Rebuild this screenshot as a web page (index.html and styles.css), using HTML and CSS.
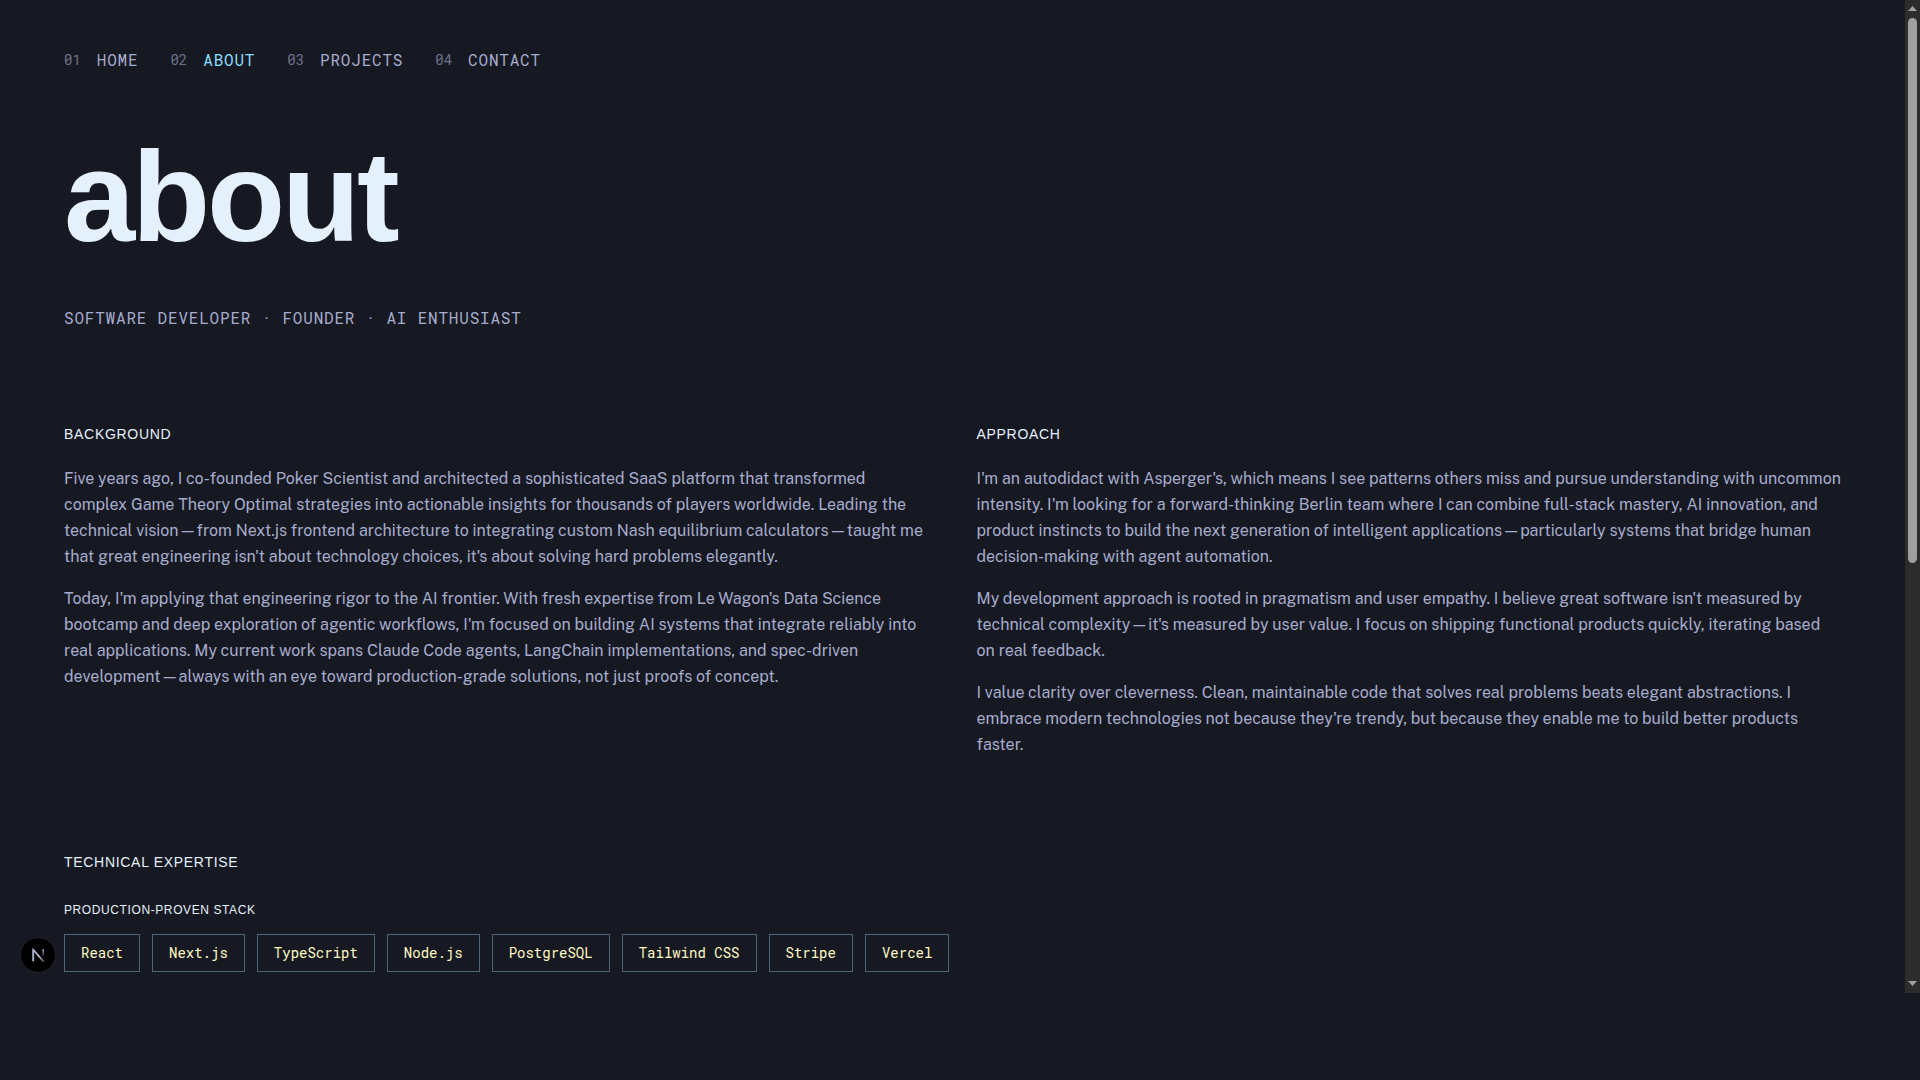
FILE: index.html
```html
<!DOCTYPE html>
<html lang="en">
<head>
	<meta charset="utf-8">
	<meta name="viewport" content="width=device-width, initial-scale=1">
	<title>about</title>
	<link rel="stylesheet" href="styles.css">
</head>
<body>
	<div class="page">
		<div class="content">
			<nav class="nav">
				<a href="#home"><span class="num">01</span>HOME</a>
				<a href="#about" class="active"><span class="num">02</span>ABOUT</a>
				<a href="#projects"><span class="num">03</span>PROJECTS</a>
				<a href="#contact"><span class="num">04</span>CONTACT</a>
			</nav>
			<main>
				<h1>about</h1>
				<p class="subtitle">SOFTWARE DEVELOPER · FOUNDER · AI ENTHUSIAST</p>
				<div class="columns">
					<section class="column">
						<h2>BACKGROUND</h2>
						<p>Five years ago, I co-founded Poker Scientist and architected a sophisticated SaaS platform that transformed complex Game Theory Optimal strategies into actionable insights for thousands of players worldwide. Leading the technical vision—from Next.js frontend architecture to integrating custom Nash equilibrium calculators—taught me that great engineering isn't about technology choices, it's about solving hard problems elegantly.</p>
						<p>Today, I'm applying that engineering rigor to the AI frontier. With fresh expertise from Le Wagon's Data Science bootcamp and deep exploration of agentic workflows, I'm focused on building AI systems that integrate reliably into real applications. My current work spans Claude Code agents, LangChain implementations, and spec-driven development—always with an eye toward production-grade solutions, not just proofs of concept.</p>
					</section>
					<section class="column">
						<h2>APPROACH</h2>
						<p>I'm an autodidact with Asperger's, which means I see patterns others miss and pursue understanding with uncommon intensity. I'm looking for a forward-thinking Berlin team where I can combine full-stack mastery, AI innovation, and product instincts to build the next generation of intelligent applications—particularly systems that bridge human decision-making with agent automation.</p>
						<p>My development approach is rooted in pragmatism and user empathy. I believe great software isn't measured by technical complexity—it's measured by user value. I focus on shipping functional products quickly, iterating based on real feedback.</p>
						<p>I value clarity over cleverness. Clean, maintainable code that solves real problems beats elegant abstractions. I embrace modern technologies not because they're trendy, but because they enable me to build better products faster.</p>
					</section>
				</div>
				<section class="expertise">
					<h2>TECHNICAL EXPERTISE</h2>
					<h3>PRODUCTION-PROVEN STACK</h3>
					<ul class="tags">
						<li>React</li>
						<li>Next.js</li>
						<li>TypeScript</li>
						<li>Node.js</li>
						<li>PostgreSQL</li>
						<li>Tailwind CSS</li>
						<li>Stripe</li>
						<li>Vercel</li>
					</ul>
				</section>
			</main>
		</div>
		<!-- scroll bar -->
		<div class="scrollbar" aria-hidden="true">
			<svg class="arrow" viewBox="0 0 9 5"><path d="M0 5L4.500 0L9 5Z"/></svg>
			<div class="track"><div class="thumb"></div></div>
			<svg class="arrow" viewBox="0 0 9 5"><path d="M0 0L4.500 5L9 0Z"/></svg>
		</div>
		<!-- dev tools button -->
		<button class="badge" type="button" aria-label="Open Next.js Dev Tools">
			<svg viewBox="0 0 36 36" fill="none">
				<defs>
					<linearGradient id="diag" x1="19" y1="19" x2="25" y2="26" gradientUnits="userSpaceOnUse">
						<stop stop-color="#c4c9e2"/>
						<stop offset="1" stop-color="#c4c9e2" stop-opacity="0.3"/>
					</linearGradient>
					<linearGradient id="stem" x1="23" y1="12" x2="23" y2="21" gradientUnits="userSpaceOnUse">
						<stop stop-color="#a6accd"/>
						<stop offset="1" stop-color="#a6accd" stop-opacity="0"/>
					</linearGradient>
				</defs>
				<path d="M13 24.500V12.500L24 25" stroke="url(#diag)" stroke-width="1.700"/>
				<path d="M13 24.500V12.500" stroke="#a6accd" stroke-width="1.700"/>
				<path d="M23.500 12V22" stroke="url(#stem)" stroke-width="1.700"/>
			</svg>
		</button>
	</div>
</body>
</html>
```
FILE: styles.css
```css
*{margin: 0;padding: 0;box-sizing: border-box;}
body{
	background: #171922;
	color: #a6accd;
	font-family: "Public Sans", Roboto, sans-serif;
	font-size: 16px;
	line-height: 26px;
}
ul{list-style: none;}
.page{
	position: relative;
	display: flex;
}
.content{
	flex: 1;
	padding: 48px 64px 21px;
}
.nav{
	display: flex;
	flex-wrap: wrap;
	gap: 32px;
	font-family: "Roboto Mono", "Liberation Mono", monospace;
	line-height: 24px;
	letter-spacing: 0.05em;
	margin-bottom: 64px;
}
.nav a{
	display: flex;
	gap: 16px;
	color: #a6accd;
	text-decoration: none;
}
.nav a.active{color: #89ddff;}
.num{
	color: #a6accd;
	font-size: 14px;
	letter-spacing: 0;
	opacity: 0.6;
}
h1{
	color: #e4f0fb;
	font-family: "Liberation Sans", Arial, sans-serif;
	font-size: 128px;
	line-height: 122px;
	letter-spacing: -0.025em;
	margin-bottom: 50px;
}
.subtitle{
	font-family: "Roboto Mono", "Liberation Mono", monospace;
	line-height: 20px;
	letter-spacing: 0.05em;
	margin-bottom: 96px;
}
h2, h3{
	color: #e4f0fb;
	font-family: "Liberation Sans", Arial, sans-serif;
	font-weight: normal;
	line-height: 20px;
	letter-spacing: 0.05em;
}
h2{font-size: 14px;}
h3{font-size: 12px;}
.columns{
	display: grid;
	grid-template-columns: 1fr 1fr;
	gap: 48px;
	margin-bottom: 94px;
}
.column{
	display: flex;
	flex-direction: column;
	gap: 16px;
}
.column h2{margin-bottom: 6px;}
.expertise h2{margin-bottom: 28px;}
.expertise h3{margin-bottom: 14px;}
.tags{
	display: flex;
	flex-wrap: wrap;
	gap: 12px;
}
.tags li{
	padding: 8px 16px;
	border: 1px solid #506477;
	color: #fffac2;
	font-family: "Roboto Mono", "Liberation Mono", monospace;
	font-size: 14px;
	line-height: 20px;
}
.scrollbar{
	display: flex;
	flex-direction: column;
	align-items: center;
	width: 15px;
	padding: 6px 0 7px;
	background: #2c2c2c;
}
.arrow{
	width: 9px;
	height: 5px;
	fill: #9f9f9f;
}
.track{
	flex: 1;
	margin: 7px 0;
}
.thumb{
	width: 9px;
	height: 57%;
	border-radius: 5px;
	background: #9f9f9f;
}
.badge{
	position: absolute;
	left: 20px;
	bottom: 20px;
	width: 36px;
	height: 36px;
	border: 1px solid #22242c;
	border-radius: 50%;
	background: #000;
	cursor: pointer;
}
.badge svg{display: block;}
```
